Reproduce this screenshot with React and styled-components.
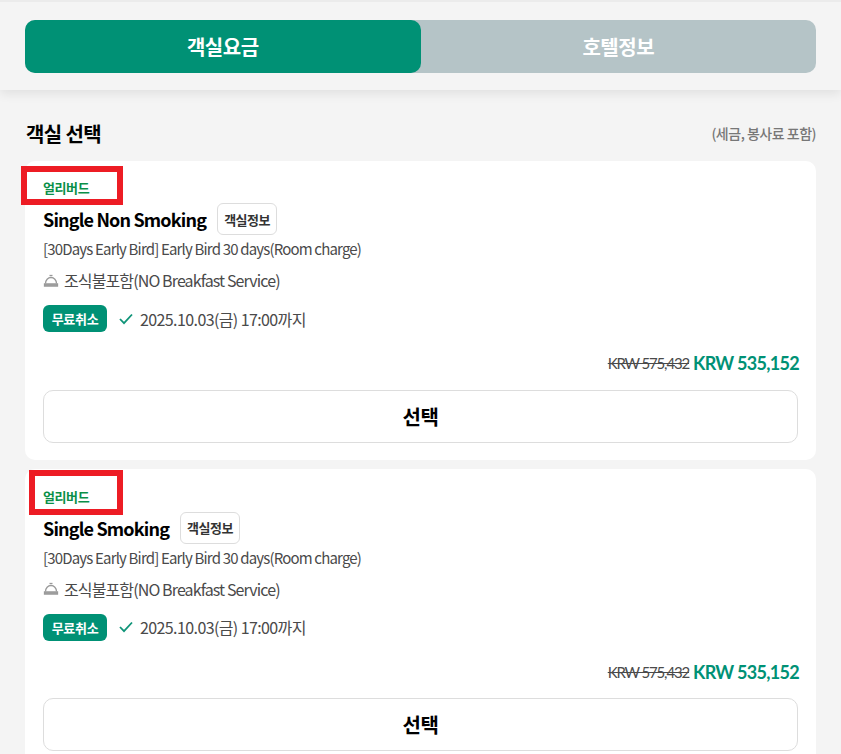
import React from 'react';
import styled, { createGlobalStyle } from 'styled-components';

const GlobalStyle = createGlobalStyle`
  html, body {
    margin: 0;
    padding: 0;
    background: #f4f4f4;
    height: 754px;
    overflow: hidden;
    font-family: "Noto Sans CJK KR", "Noto Sans", sans-serif;
  }
`;

const Header = styled.div`
  height: 90px;
  box-sizing: border-box;
  padding: 20px 25px 0;
  border-top: 2px solid #ebebeb;
  box-shadow: 0 4px 10px rgba(0, 0, 0, 0.08);
`;
const Tabs = styled.div`
  display: flex;
  height: 53px;
  margin-top: -2px;
  border-radius: 10px;
  background: #b5c4c7;
`;
const Tab = styled.div`
  flex: 1;
  display: flex;
  align-items: center;
  justify-content: center;
  border-radius: 10px;
  font-size: 20px;
  font-weight: 700;
  letter-spacing: -0.5px;
  color: #fff;
  background: ${p => (p.$active ? '#009175' : 'transparent')};
`;
const Content = styled.div`
  padding: 0 25px;
`;
const TitleRow = styled.div`
  display: flex;
  justify-content: space-between;
  align-items: center;
  box-sizing: border-box;
  height: 71px;
  padding-top: 15px;
`;
const Title = styled.h2`
  margin: 0 0 0 1px;
  font-size: 20px;
  font-weight: 700;
  letter-spacing: -0.6px;
  color: #000;
`;
const Note = styled.span`
  font-size: 14px;
  font-weight: 500;
  letter-spacing: -0.5px;
  color: #777;
`;
const Card = styled.div`
  position: relative;
  box-sizing: border-box;
  height: 299px;
  margin-bottom: 9px;
  padding: ${p => p.$paddingTop}px 18px 0;
  border-radius: 10px;
  background: #fff;
`;
const Marker = styled.div`
  position: absolute;
  box-sizing: border-box;
  top: ${p => p.$top}px;
  left: ${p => p.$left}px;
  width: ${p => p.$width}px;
  height: ${p => p.$height}px;
  border: 6px solid #ed1c24;
`;
const Tag = styled.div`
  height: 20px;
  line-height: 20px;
  font-size: 13px;
  font-weight: 700;
  letter-spacing: -0.4px;
  color: #0a8f48;
`;
const NameRow = styled.div`
  display: flex;
  align-items: center;
  gap: 11px;
  height: 32px;
  margin-top: 5px;
`;
const Name = styled.span`
  font-size: 18px;
  font-weight: 700;
  letter-spacing: -0.83px;
  color: #000;
`;
const InfoButton = styled.div`
  box-sizing: border-box;
  height: 32px;
  padding: 0 6px;
  display: flex;
  align-items: center;
  border: 1px solid #ddd;
  border-radius: 6px;
  font-size: 13px;
  font-weight: 700;
  letter-spacing: -0.5px;
  color: #333;
`;
const Plan = styled.div`
  margin-top: 3px;
  height: 22px;
  line-height: 22px;
  font-size: 15px;
  letter-spacing: -0.83px;
  color: #4a4a4a;
`;
const Meal = styled.div`
  display: flex;
  align-items: center;
  gap: 5px;
  margin-top: 9px;
  height: 22px;
  font-size: 16px;
  letter-spacing: -0.88px;
  color: #4a4a4a;
`;
const CancelRow = styled.div`
  display: flex;
  align-items: center;
  margin-top: 14px;
  height: 27px;
`;
const Badge = styled.span`
  display: flex;
  align-items: center;
  justify-content: center;
  width: 64px;
  height: 27px;
  border-radius: 6px;
  background: #009175;
  color: #fff;
  font-size: 13px;
  font-weight: 700;
  letter-spacing: -0.3px;
`;
const Deadline = styled.span`
  display: flex;
  align-items: center;
  gap: 7px;
  margin-left: 12px;
  font-size: 16px;
  letter-spacing: -0.6px;
  color: #4a4a4a;
`;
const PriceRow = styled.div`
  display: flex;
  justify-content: flex-end;
  align-items: center;
  gap: 4px;
  margin: 17px -1px 0 0;
  height: 28px;
  font-family: "Lato", sans-serif;
`;
const OldPrice = styled.span`
  font-size: 15px;
  letter-spacing: -1.15px;
  color: #4a4a4a;
  text-decoration: line-through;
`;
const Price = styled.span`
  font-size: 18px;
  font-weight: 700;
  letter-spacing: -0.7px;
  color: #009175;
`;
const SelectButton = styled.div`
  box-sizing: border-box;
  display: flex;
  align-items: center;
  justify-content: center;
  height: 53px;
  margin-top: 12.9px;
  border: 1px solid #ddd;
  border-radius: 10px;
  font-size: 20px;
  font-weight: 700;
  letter-spacing: -0.5px;
  color: #000;
`;

const BellIcon = () => (
  <svg width="16" height="13" viewBox="0 0 16 13" fill="none" stroke="#999" strokeWidth="1.3">
    <path d="M2.500 9.500C2.500 6 5 3.500 8 3.500s5.500 2.500 5.500 6" />
    <path d="M6.500 1.500h3" />
    <path d="M1.500 10h13v2h-13z" fill="#aaa" />
  </svg>
);

const CheckIcon = () => (
  <svg width="14" height="12" viewBox="0 0 14 12" fill="none" stroke="#0f9478" strokeWidth="1.800">
    <path d="M1 6l4 4.200L13 1.500" />
  </svg>
);

const rooms = [
  { name: 'Single Non Smoking', paddingTop: 17, marker: { $top: 5, $left: -4, $width: 102, $height: 39 } },
  { name: 'Single Smoking', paddingTop: 17.5, marker: { $top: 1, $left: 4, $width: 94, $height: 45 } },
];

export default function App() {
  return (
    <>
      <GlobalStyle />
      <Header>
        <Tabs>
          <Tab $active>객실요금</Tab>
          <Tab>호텔정보</Tab>
        </Tabs>
      </Header>
      <Content>
        <TitleRow>
          <Title>객실 선택</Title>
          <Note>(세금, 봉사료 포함)</Note>
        </TitleRow>
        {rooms.map(room => (
          <Card key={room.name} $paddingTop={room.paddingTop}>
            <Marker {...room.marker} />
            <Tag>얼리버드</Tag>
            <NameRow>
              <Name>{room.name}</Name>
              <InfoButton>객실정보</InfoButton>
            </NameRow>
            <Plan>[30Days Early Bird] Early Bird 30 days(Room charge)</Plan>
            <Meal>
              <BellIcon />
              조식불포함(NO Breakfast Service)
            </Meal>
            <CancelRow>
              <Badge>무료취소</Badge>
              <Deadline>
                <CheckIcon />
                2025.10.03(금) 17:00까지
              </Deadline>
            </CancelRow>
            <PriceRow>
              <OldPrice>KRW 575,432</OldPrice>
              <Price>KRW 535,152</Price>
            </PriceRow>
            <SelectButton>선택</SelectButton>
          </Card>
        ))}
      </Content>
    </>
  );
}
